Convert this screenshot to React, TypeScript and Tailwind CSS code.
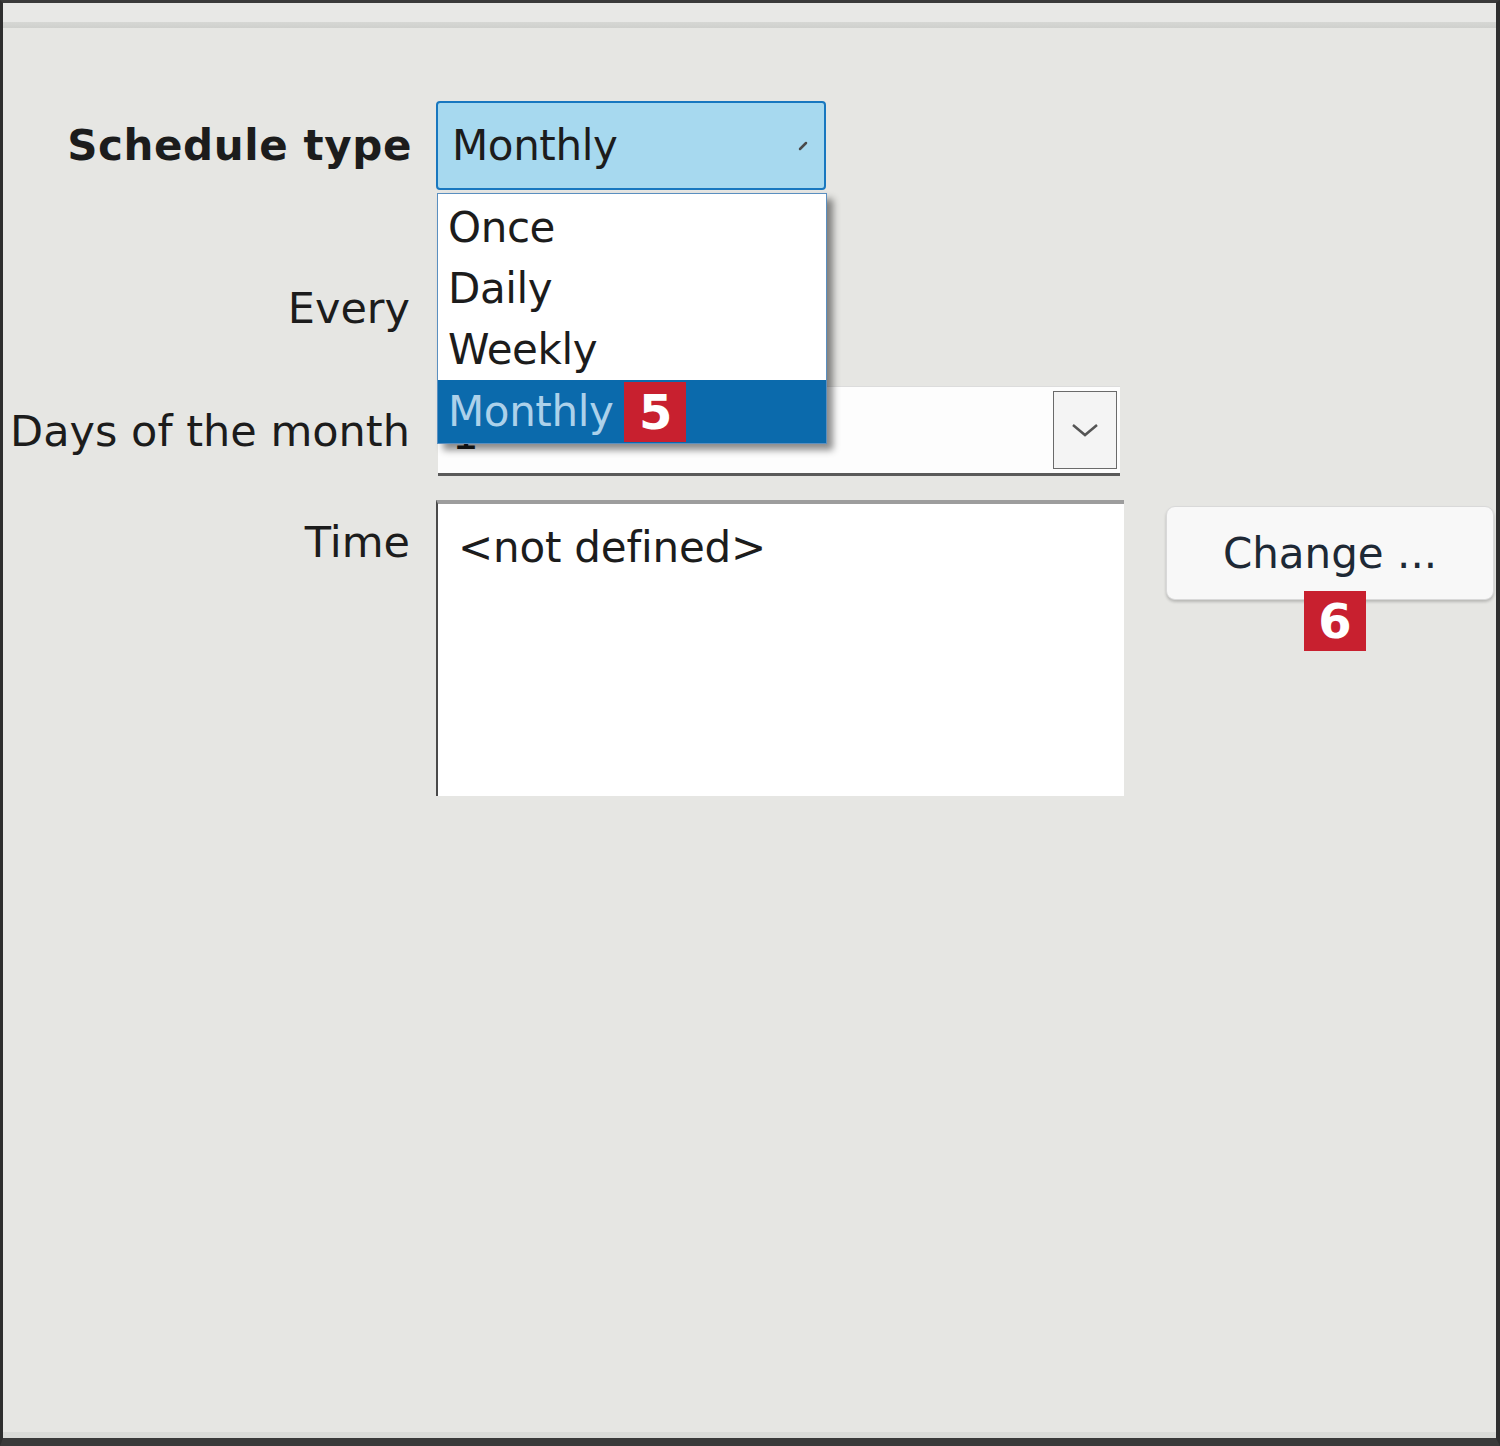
import React from "react";

const font = { fontFamily: '"DejaVu Sans", Verdana, sans-serif' };

function Badge({ n }: { n: string }) {
  return (
    <div className="flex h-[60px] w-[62px] items-center justify-center bg-[#c8202f] text-[48px] font-bold leading-none text-white">
      {n}
    </div>
  );
}

export default function App() {
  return (
    <div
      className="flex h-[1446px] w-[1500px] flex-col overflow-hidden border-b-[8px] border-l-[3px] border-r-[4px] border-t-[3px] border-b-[#3a3a3a] border-l-[#2e2e2e] border-r-[#2e2e2e] border-t-[#3a3a3a] bg-[#e6e6e3] text-[#1c1c1c]"
      style={font}
    >
      {/* top strip */}
      <div className="h-[19px] bg-[#e8e8e6]" />
      <div className="h-[6px] bg-gradient-to-b from-[#d6d7d4] to-[#cfd0cd]" />

      <div className="relative flex flex-1 flex-col pt-[73px]">
        {/* Row 1: Schedule type */}
        <div className="flex h-[89px] items-center">
          <div className="w-[409px] text-right text-[42px] font-bold tracking-[0.6px]">
            Schedule type
          </div>
          <div className="relative ml-[24px] flex h-[89px] w-[390px] items-center rounded-[4px] border-2 border-[#1877bf] bg-[#a7d9ef] pl-[14px] text-[42px] tracking-[-0.4px]">
            Monthly
            <svg className="absolute right-[16px] top-[38px]" width="10" height="10" viewBox="0 0 10 10">
              <path d="M2 8 L8 2" stroke="#4a4a4a" strokeWidth="2.5" strokeLinecap="round" />
            </svg>
            {/* dropdown list */}
            <div className="absolute left-[-1px] top-[90px] z-10 w-[390px] border border-[#5a8fc0] bg-white pt-[3px] shadow-[6px_6px_7px_rgba(0,0,0,0.45)]">
              <div className="flex h-[61px] items-center pl-[10px] text-[42px] tracking-[-0.4px]">Once</div>
              <div className="flex h-[61px] items-center pl-[10px] text-[42px] tracking-[-0.4px]">Daily</div>
              <div className="flex h-[61px] items-center pl-[10px] text-[42px] tracking-[-0.4px]">Weekly</div>
              <div className="flex h-[63px] items-center bg-[#0b6aac] pl-[10px] text-[42px] tracking-[-0.4px] text-[#acd1ea]">
                Monthly
                <div className="ml-[11px]">
                  <Badge n="5" />
                </div>
              </div>
            </div>
          </div>
        </div>

        {/* Row 2: Every */}
        <div className="mt-[74px] flex h-[88px] items-center">
          <div className="w-[407px] text-right text-[43px]">Every</div>
        </div>

        {/* Row 3: Days of the month */}
        <div className="mt-[34px] flex h-[90px] items-center">
          <div className="w-[407px] text-right text-[43px]">Days of the month</div>
          <div className="ml-[28px] flex h-[90px] w-[682px] items-center border-b-[3px] border-t border-b-[#5a5a5a] border-t-[#dcdcdc] bg-[#fdfdfd]">
            <div className="flex-1 pl-[14px] pt-[8px] text-[42px]">1</div>
            <div className="mr-[3px] flex h-[78px] w-[64px] items-center justify-center border border-[#6a6a6a] bg-[#f4f4f4]">
              <svg width="30" height="18" viewBox="0 0 30 18">
                <path d="M3 4 L15 14 L27 4" fill="none" stroke="#555" strokeWidth="2.5" />
              </svg>
            </div>
          </div>
        </div>

        {/* Row 4: Time */}
        <div className="mt-[24px] flex items-start">
          <div className="w-[407px] pt-[10px] text-right text-[43px]">Time</div>
          <div className="ml-[26px] h-[296px] w-[688px] border-l-2 border-t-[4px] border-l-[#4a4a4a] border-t-[#9d9d9d] bg-white pl-[20px] pt-[12px] text-[42px] tracking-[-0.2px]">
            &lt;not defined&gt;
          </div>
          <div className="relative ml-[42px] mt-[6px]">
            <div className="flex h-[94px] w-[328px] items-center justify-center rounded-[9px] border border-[#d9d9d9] bg-[#f8f8f8] text-[42px] tracking-[0px] text-[#1e2935] shadow-[0_2px_3px_rgba(0,0,0,0.2)]">
              Change ...
            </div>
            <div className="absolute left-[138px] top-[85px]">
              <Badge n="6" />
            </div>
          </div>
        </div>

        <div className="flex-1" />
        <div className="h-[6px] bg-[#dadbd8]" />
      </div>
    </div>
  );
}
